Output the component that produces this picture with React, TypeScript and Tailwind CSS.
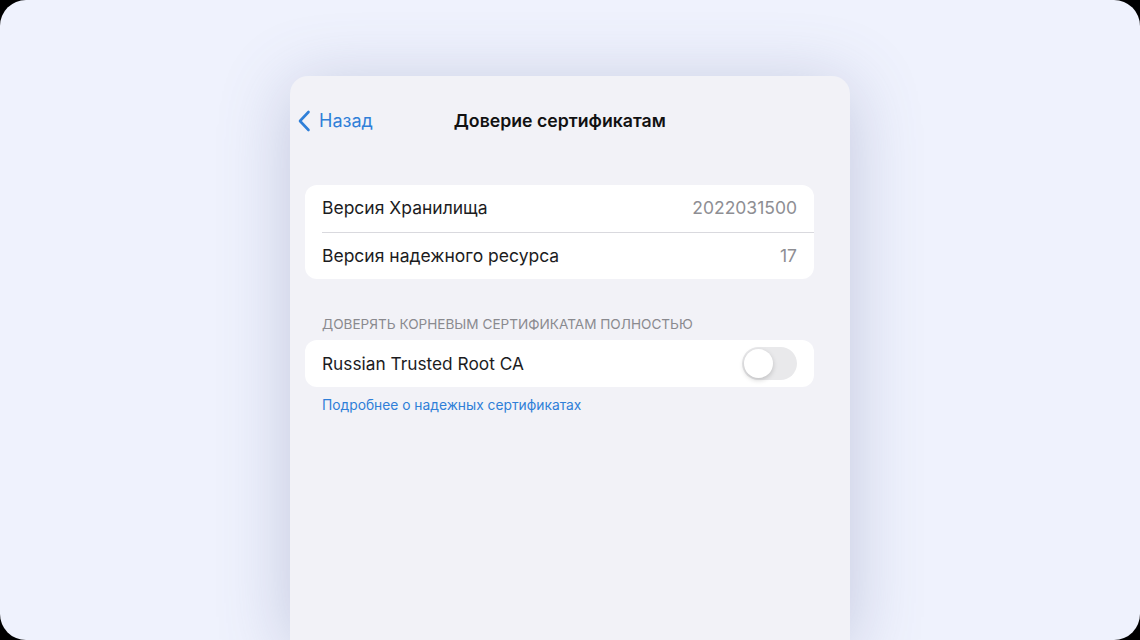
import React from "react";

export default function App() {
  return (
    <div className="w-[1140px] h-[640px] bg-black" style={{ fontFamily: "Inter, 'Noto Sans', sans-serif" }}>
      <div className="w-full h-full rounded-[26px] bg-[#eff2fd] overflow-hidden flex flex-col">
        <div className="ml-[290px] mt-[76px] w-[560px] flex-1 rounded-t-[18px] bg-[#f2f2f7] shadow-[0_10px_70px_rgba(90,100,150,0.3)] flex flex-col">
          <div className="h-[90px] flex items-start pt-[34px]">
            <div className="flex items-center ml-[7px] text-[#2f7fd8]">
              <svg width="14" height="22" viewBox="0 0 14 22" fill="none">
                <path d="M11.5 2 L3 11 L11.5 20" stroke="currentColor" strokeWidth="2.6" strokeLinecap="round" strokeLinejoin="round" />
              </svg>
              <span className="ml-[8px] text-[18px] leading-[22px]">Назад</span>
            </div>
            <div className="ml-[81px] text-[17.7px] leading-[22px] font-semibold text-[#111]">Доверие сертификатам</div>
          </div>
          <div className="h-[19px]" />
          <div className="ml-[15px] w-[509px] rounded-[12px] bg-white">
            <div className="h-[47px] flex items-center justify-between pl-[17px] pr-[17px] text-[17.5px]">
              <span className="text-[#1c1c1e]">Версия Хранилища</span>
              <span className="text-[#8e8e93]">2022031500</span>
            </div>
            <div className="ml-[17px] h-px bg-[#d9d9de]" />
            <div className="h-[46px] flex items-center justify-between pl-[17px] pr-[17px] text-[17.5px]">
              <span className="text-[#1c1c1e]">Версия надежного ресурса</span>
              <span className="text-[#8e8e93]">17</span>
            </div>
          </div>
          <div className="ml-[32px] mt-[37px] text-[13.6px] leading-[16px] text-[#8a8a8f]">ДОВЕРЯТЬ КОРНЕВЫМ СЕРТИФИКАТАМ ПОЛНОСТЬЮ</div>
          <div className="ml-[15px] mt-[8px] w-[509px] h-[47px] rounded-[12px] bg-white flex items-center justify-between pl-[17px] pr-[17px]">
            <span className="text-[17.3px] text-[#1c1c1e]">Russian Trusted Root CA</span>
            <div className="w-[55px] h-[33px] rounded-full bg-[#e9e9eb] p-[2px] flex items-center">
              <div className="w-[29px] h-[29px] rounded-full bg-white shadow-[0_2px_5px_rgba(0,0,0,0.18)]" />
            </div>
          </div>
          <div className="ml-[32px] mt-[10px] text-[13.8px] leading-[16px] text-[#2f7fd8]">Подробнее о надежных сертификатах</div>
        </div>
      </div>
    </div>
  );
}
